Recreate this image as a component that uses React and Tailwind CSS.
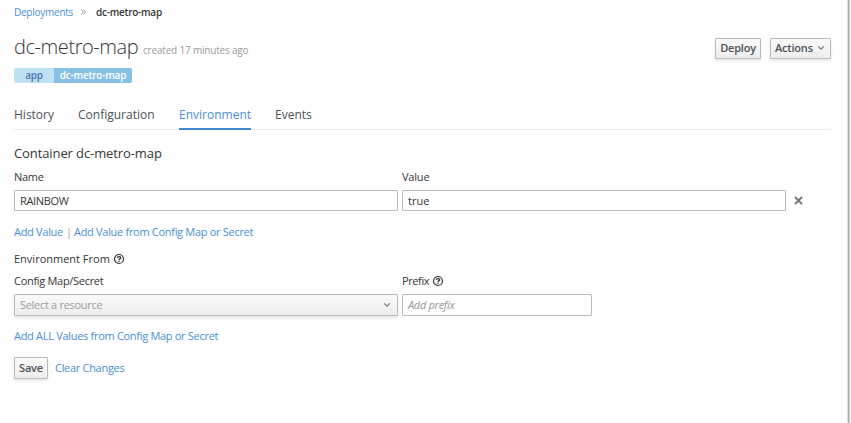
import React from "react";

const Chevron = () => (
  <svg width="8" height="6" viewBox="0 0 8 6" fill="none" stroke="#72767b" strokeWidth="1.1">
    <path d="M1.2 1.3 4 4.1l2.800-2.800" />
  </svg>
);

const Help = () => (
  <svg width="10" height="10" viewBox="0 0 10 10" fill="none" stroke="#363636" overflow="visible">
    <circle cx="5" cy="5" r="4.500" strokeWidth="1.200" />
    <path d="M3.300 4C3.400 2.200 6.800 2.200 6.700 3.900C6.600 4.900 5 4.800 5 6" strokeWidth="1.400" />
    <path d="M5 6.800v1.200" strokeWidth="1.400" />
  </svg>
);

const button =
  "flex items-center border border-[#bbb] rounded-[1px] bg-linear-to-b from-[#fafafa] to-[#ededed] shadow-[0_2px_3px_rgba(3,3,3,0.1)] font-semibold text-[#4d5258]";
const link = "text-[#4a90d3] tracking-[-0.3px]";
const field = "flex items-center border border-[#bbb] rounded-[1px] pl-[5px]";

export default function App() {
  return (
    <div className="flex h-[423px] w-[851px] overflow-hidden bg-[#fefefe] font-['Open_Sans',sans-serif] text-[11px] leading-4 whitespace-nowrap text-[#363636]">
      <main className="w-[847px] shrink-0 pl-[14px]">
        <nav className="flex h-[23px] items-center text-[10px] tracking-[-0.25px]">
          <a className="w-[67px] text-[#4a90d3]">Deployments</a>
          <svg className="mt-px" width="5" height="6" viewBox="0 0 5 6" fill="none" stroke="#9c9c9c" strokeWidth="0.900">
            <path d="M.3.500 2.300 3 .3 5.500M2.500.500 4.500 3 2.500 5.500" />
          </svg>
          <span className="ml-[10px] font-semibold">dc-metro-map</span>
        </nav>

        <header className="flex h-[45px] w-[817px] items-center justify-between">
          <h1 className="mt-[3px] flex items-baseline">
            <span className="w-[129px] text-[20px] leading-7 font-light tracking-[-0.42px]">dc-metro-map</span>
            <span className="text-[10px] tracking-[-0.19px] text-[#9c9c9c]">created 17 minutes ago</span>
          </h1>
          <div className="mt-[5px] flex gap-[9px]">
            <button className={`${button} h-[21px] w-[46px] justify-center tracking-[-0.2px]`}>Deploy</button>
            <button className={`${button} h-[21px] w-[61px] gap-[4px] pl-[4px] tracking-[-0.2px]`}>
              Actions <Chevron />
            </button>
          </div>
        </header>

        <div className="flex h-[15px] w-[118px] overflow-hidden rounded-[2px] text-[10px] leading-[15px] font-semibold tracking-[-0.2px]">
          <span className="w-10 bg-[#bee1f4] text-center text-[#4576a8]">app</span>
          <span className="w-[78px] bg-[#88c1e6] text-center text-white">dc-metro-map</span>
        </div>

        <div className="mt-[17px] flex h-[30px] w-[817px] gap-6 border-b border-[#ebebeb] text-[12px] leading-[29px] text-[#4d5258]">
          <span className="w-10">History</span>
          <span className="w-[77px]">Configuration</span>
          <span className="h-[30px] w-[72px] border-b-2 border-[#3f87cf] text-[#4a90d3]">Environment</span>
          <span>Events</span>
        </div>

        <h2 className="mt-[14px] text-[13px] leading-[18px] tracking-[-0.1px]">Container dc-metro-map</h2>
        <div className="mt-[7px] grid grid-cols-[384px_384px] gap-x-1">
          <span className="tracking-[-0.3px]">Name</span>
          <span className="tracking-[-0.2px]">Value</span>
        </div>
        <div className="mt-[5px] flex h-[21px] items-center gap-1">
          <div className={`${field} h-[21px] w-96 tracking-[-0.35px]`}>RAINBOW</div>
          <div className={`${field} h-[21px] w-96`}>true</div>
          <svg className="ml-1" width="9" height="9" viewBox="0 0 9 9" fill="none" stroke="#72767b" strokeWidth="1.800">
            <path d="M1 1l7 7M8 1 1 8" />
          </svg>
        </div>
        <div className="mt-[13px] flex">
          <a className={`${link} w-[52px]`}>Add Value</a>
          <span className="w-2 text-[#9c9c9c]">|</span>
          <a className={link}>Add Value from Config Map or Secret</a>
        </div>

        <div className="mt-[11px] flex items-center gap-1">Environment From <Help /></div>
        <div className="mt-[6px] grid grid-cols-[384px_190px] gap-x-1">
          <span className="tracking-[-0.3px]">Config Map/Secret</span>
          <span className="flex items-center gap-1 tracking-[-0.4px]">Prefix <Help /></span>
        </div>
        <div className="mt-[5px] flex gap-1">
          <div className="flex h-[22px] w-96 items-center justify-between rounded-[1px] border border-[#bbb] bg-linear-to-b from-[#fafafa] to-[#ededed] pr-[6px] pl-[5px] tracking-[-0.3px] text-[#9c9c9c] shadow-[0_2px_3px_rgba(3,3,3,0.1)]">
            Select a resource <Chevron />
          </div>
          <div className={`${field} h-[22px] w-[190px] tracking-[-0.3px] text-[#999] italic`}>Add prefix</div>
        </div>
        <div className="mt-3"><a className={link}>Add ALL Values from Config Map or Secret</a></div>
        <div className="mt-[13px] flex items-center gap-[7px]">
          <button className={`${button} h-[22px] w-[34px] justify-center tracking-[-0.2px]`}>Save</button>
          <a className={link}>Clear Changes</a>
        </div>
      </main>
      <aside className="w-1 shrink-0 border-l border-[#dedede] bg-[#f5f5f5]">
        <div className="h-full w-[2px] border-r border-[#d5d5d5] bg-[#aaa]" />
      </aside>
    </div>
  );
}
